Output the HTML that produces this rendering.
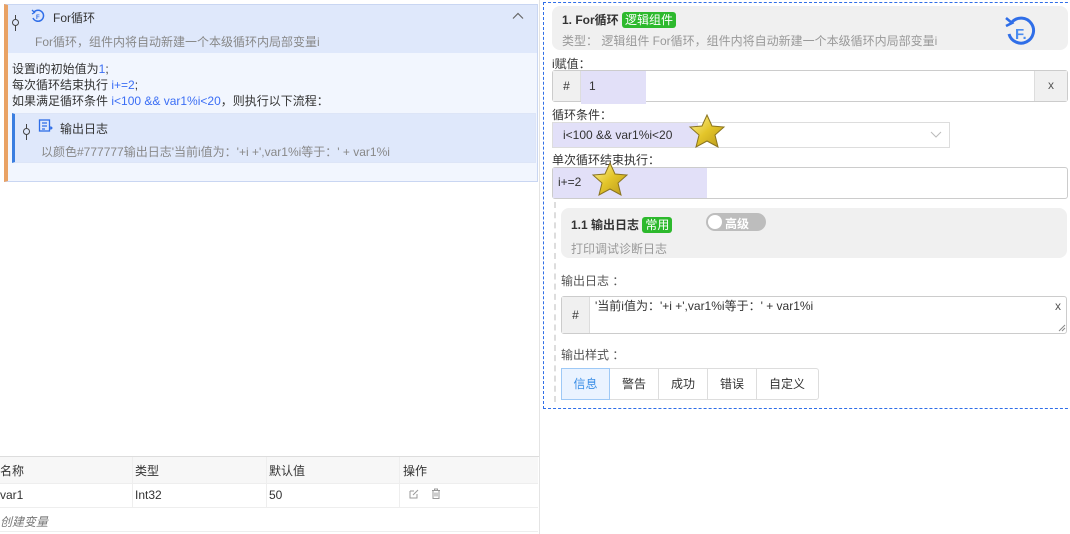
<!DOCTYPE html>
<html><head><meta charset="utf-8"><style>
*{box-sizing:border-box;margin:0;padding:0}
body{width:1070px;height:534px;background:#fff;font-family:"Liberation Sans","Noto Sans CJK SC",sans-serif;font-size:12px;color:#333;position:relative;overflow:hidden}
.a{position:absolute}
.blue{color:#3b6ef5}
.gray{color:#888}
.tag{display:inline-block;background:#2db92d;color:#fff;border-radius:3px;padding:0 3px;font-size:12px;line-height:16px;font-weight:normal}
</style></head><body>
<!-- left panel -->
<div class="a" style="left:4px;top:4px;width:534px;height:178px;border:1px solid #c9d6f2;border-left:4px solid #e9a264;background:#f2f6fe"></div>
<div class="a" style="left:8px;top:5px;width:529px;height:48px;background:#dfe8fb"></div>
<div class="a" style="left:15px;top:15px;width:1px;height:16px;background:#444"></div>
<div class="a" style="left:12px;top:19px;width:7px;height:7px;border:1px solid #444;border-radius:50%;background:#dfe8fb"></div>
<svg class="a" style="left:31px;top:9px" width="14" height="14" viewBox="0 0 14 14"><path d="M3 3 A5.5 5.5 0 1 1 2 9" fill="none" stroke="#2f6ee8" stroke-width="1.5"/><path d="M1 1 L3.5 3.5 L1 5" fill="none" stroke="#2f6ee8" stroke-width="1.3"/><text x="5" y="10" font-size="6" fill="#2f6ee8" font-family="Liberation Sans" font-weight="bold">F</text></svg>
<div class="a" style="left:53px;top:9px;font-size:12px;color:#333">For循环</div>
<svg class="a" style="left:512px;top:12px" width="12" height="8" viewBox="0 0 12 8"><path d="M1 6.5 L6 1.5 L11 6.5" fill="none" stroke="#666" stroke-width="1.2"/></svg>
<div class="a gray" style="left:35px;top:33px">For循环，组件内将自动新建一个本级循环内局部变量i</div>
<div class="a" style="left:12px;top:61px;line-height:16px">设置i的初始值为<span class="blue">1</span>;<br>每次循环结束执行 <span class="blue">i+=2</span>;<br>如果满足循环条件 <span class="blue">i&lt;100 &amp;&amp; var1%i&lt;20</span>，则执行以下流程：</div>
<div class="a" style="left:12px;top:113px;width:524px;height:50px;border:1px solid #dde5f7;border-left:3px solid #3b7ee0;background:#dfe8fb"></div>
<div class="a" style="left:26px;top:124px;width:1px;height:16px;background:#444"></div>
<div class="a" style="left:23px;top:128px;width:7px;height:7px;border:1px solid #444;border-radius:50%;background:#dfe8fb"></div>
<svg class="a" style="left:38px;top:119px" width="15" height="14" viewBox="0 0 15 14"><rect x="1.5" y="1" width="10" height="11" fill="none" stroke="#2f6ee8" stroke-width="1.3"/><path d="M4 4h5M4 7h5M4 10h3M11 9h3M12.5 7.5l1.5 1.5-1.5 1.5" stroke="#2f6ee8" stroke-width="1.2" fill="none"/></svg>
<div class="a" style="left:60px;top:120px">输出日志</div>
<div class="a gray" style="left:41px;top:143px">以颜色#777777输出日志'当前i值为：'+i +',var1%i等于：' + var1%i</div>
<!-- divider -->
<div class="a" style="left:539px;top:0;width:1px;height:534px;background:#e4e4e4"></div>
<!-- table -->
<div class="a" style="left:0;top:456px;width:539px;height:1px;background:#ddd"></div>
<div class="a" style="left:0;top:457px;width:538px;height:26px;background:#f7f7f7"></div>
<div class="a" style="left:0;top:483px;width:538px;height:1px;background:#eee"></div>
<div class="a" style="left:0;top:507px;width:538px;height:1px;background:#eee"></div>
<div class="a" style="left:0;top:531px;width:538px;height:1px;background:#eee"></div>
<div class="a" style="left:132px;top:457px;width:1px;height:50px;background:#eee"></div>
<div class="a" style="left:266px;top:457px;width:1px;height:50px;background:#eee"></div>
<div class="a" style="left:399px;top:457px;width:1px;height:50px;background:#eee"></div>
<div class="a" style="left:0;top:462px">名称</div><div class="a" style="left:135px;top:462px">类型</div><div class="a" style="left:269px;top:462px">默认值</div><div class="a" style="left:403px;top:462px">操作</div>
<div class="a" style="left:0;top:488px">var1</div><div class="a" style="left:135px;top:488px">Int32</div><div class="a" style="left:269px;top:488px">50</div>
<svg class="a" style="left:409px;top:489px" width="10" height="10" viewBox="0 0 10 10"><path d="M1 2h4M1 2v7h7V5M4 6l5-5" fill="none" stroke="#999" stroke-width="1"/></svg>
<svg class="a" style="left:431px;top:488px" width="10" height="11" viewBox="0 0 10 11"><path d="M1 2.5h8M3.5 2.5V1h3v1.5M2 2.5v8h6v-8M4 4.5v4M6 4.5v4" fill="none" stroke="#999" stroke-width="1"/></svg>
<div class="a" style="left:0;top:513px;font-style:italic;color:#777">创建变量</div>
<!-- right -->
<div class="a" style="left:543px;top:2px;width:540px;height:407px;border:1px dashed #2f6ee8"></div>
<div class="a" style="left:552px;top:6px;width:516px;height:44px;background:#f0f0f0;border-radius:8px"></div>
<div class="a" style="left:562px;top:11px;font-weight:bold;font-size:12px">1. For循环 <span class="tag">逻辑组件</span></div>
<div class="a" style="left:562px;top:32px;color:#999">类型： 逻辑组件 For循环，组件内将自动新建一个本级循环内局部变量i</div>
<svg class="a" style="left:1004px;top:14px" width="36" height="34" viewBox="0 0 36 34"><path d="M8 8 A12.5 12.5 0 1 1 5 20" fill="none" stroke="#2f6ee8" stroke-width="3"/><path d="M2 4 L8 9 L2 12" fill="none" stroke="#2f6ee8" stroke-width="2.6"/><text x="11" y="25" font-size="15" fill="#4a8cf0" font-family="Liberation Sans" font-weight="bold">F.</text></svg>
<div class="a" style="left:552px;top:55px">i赋值：</div>
<div class="a" style="left:552px;top:70px;width:516px;height:32px;border:1px solid #ccc;border-radius:3px;background:#fff"></div>
<div class="a" style="left:553px;top:71px;width:28px;height:30px;background:#f0f0f0;border-right:1px solid #ddd;text-align:center;line-height:30px">#</div>
<div class="a" style="left:581px;top:71px;width:65px;height:33px;background:#e2e0f8"></div>
<div class="a" style="left:589px;top:79px">1</div>
<div class="a" style="left:1034px;top:71px;width:33px;height:30px;background:#f0f0f0;border-left:1px solid #ddd;text-align:center;line-height:28px;color:#555">x</div>
<div class="a" style="left:552px;top:106px">循环条件：</div>
<div class="a" style="left:552px;top:122px;width:398px;height:26px;border:1px solid #ddd;background:#fff"></div>
<div class="a" style="left:553px;top:123px;width:145px;height:24px;background:#e2e0f8"></div>
<div class="a" style="left:563px;top:128px">i&lt;100 &amp;&amp; var1%i&lt;20</div>
<svg class="a" style="left:930px;top:131px" width="12" height="7" viewBox="0 0 12 7"><path d="M1 1 L6 6 L11 1" fill="none" stroke="#bbb" stroke-width="1"/></svg>
<div class="a" style="left:552px;top:151px">单次循环结束执行：</div>
<div class="a" style="left:552px;top:167px;width:516px;height:32px;border:1px solid #ccc;border-radius:3px;background:#fff"></div>
<div class="a" style="left:553px;top:168px;width:154px;height:30px;background:#e2e0f8"></div>
<div class="a" style="left:558px;top:175px">i+=2</div>
<svg class="a" style="left:688px;top:113px" width="38" height="36" viewBox="0 0 38 36"><defs><linearGradient id="g" x1="0" y1="0" x2="1" y2="1"><stop offset="0" stop-color="#fff3a0"/><stop offset="0.5" stop-color="#e3c52a"/><stop offset="1" stop-color="#b8971a"/></linearGradient></defs><polygon points="19,2 24,13 36,14 27,22 30,34 19,28 8,34 11,22 2,14 14,13" fill="url(#g)" stroke="#8a7420" stroke-width="1"/></svg>
<svg class="a" style="left:591px;top:161px" width="38" height="36" viewBox="0 0 38 36"><polygon points="19,2 24,13 36,14 27,22 30,34 19,28 8,34 11,22 2,14 14,13" fill="url(#g)" stroke="#8a7420" stroke-width="1"/></svg>
<div class="a" style="left:554px;top:202px;width:0;height:200px;border-left:2px dashed #ddd"></div>
<div class="a" style="left:561px;top:208px;width:506px;height:50px;background:#f0f0f0;border-radius:8px"></div>
<div class="a" style="left:571px;top:216px;font-weight:bold">1.1 输出日志 <span class="tag">常用</span></div>
<div class="a" style="left:706px;top:213px;width:60px;height:18px;border-radius:9px;background:#bdbdbd"></div>
<div class="a" style="left:708px;top:215px;width:14px;height:14px;border-radius:50%;background:#fff"></div>
<div class="a" style="left:725px;top:215px;color:#fff;font-weight:bold">高级</div>
<div class="a" style="left:571px;top:240px;color:#999">打印调试诊断日志</div>
<div class="a" style="left:561px;top:272px;color:#555">输出日志 ：</div>
<div class="a" style="left:561px;top:296px;width:506px;height:38px;border:1px solid #ccc;border-radius:3px;background:#fff"></div>
<div class="a" style="left:562px;top:297px;width:28px;height:36px;background:#f0f0f0;border-right:1px solid #ddd;text-align:center;line-height:36px">#</div>
<div class="a" style="left:595px;top:297px">'当前i值为：'+i +',var1%i等于：' + var1%i</div>
<div class="a" style="left:1055px;top:299px;color:#555">x</div>
<svg class="a" style="left:1058px;top:324px" width="8" height="8" viewBox="0 0 8 8"><path d="M7 1L1 7M7 4L4 7" stroke="#888" stroke-width="1"/></svg>
<div class="a" style="left:561px;top:346px;color:#555">输出样式 ：</div>
<div class="a" style="left:561px;top:368px;width:258px;height:32px;border:1px solid #ddd;border-radius:3px;display:flex;background:#fff">
<div style="width:49px;background:#eaf3ff;border:1px solid #9ec9f6;color:#3a8ee6;text-align:center;line-height:30px;margin:-1px 0 -1px -1px">信息</div>
<div style="width:49px;border-right:1px solid #ddd;text-align:center;line-height:30px">警告</div>
<div style="width:49px;border-right:1px solid #ddd;text-align:center;line-height:30px">成功</div>
<div style="width:49px;border-right:1px solid #ddd;text-align:center;line-height:30px">错误</div>
<div style="width:60px;text-align:center;line-height:30px">自定义</div>
</div>
</body></html>
